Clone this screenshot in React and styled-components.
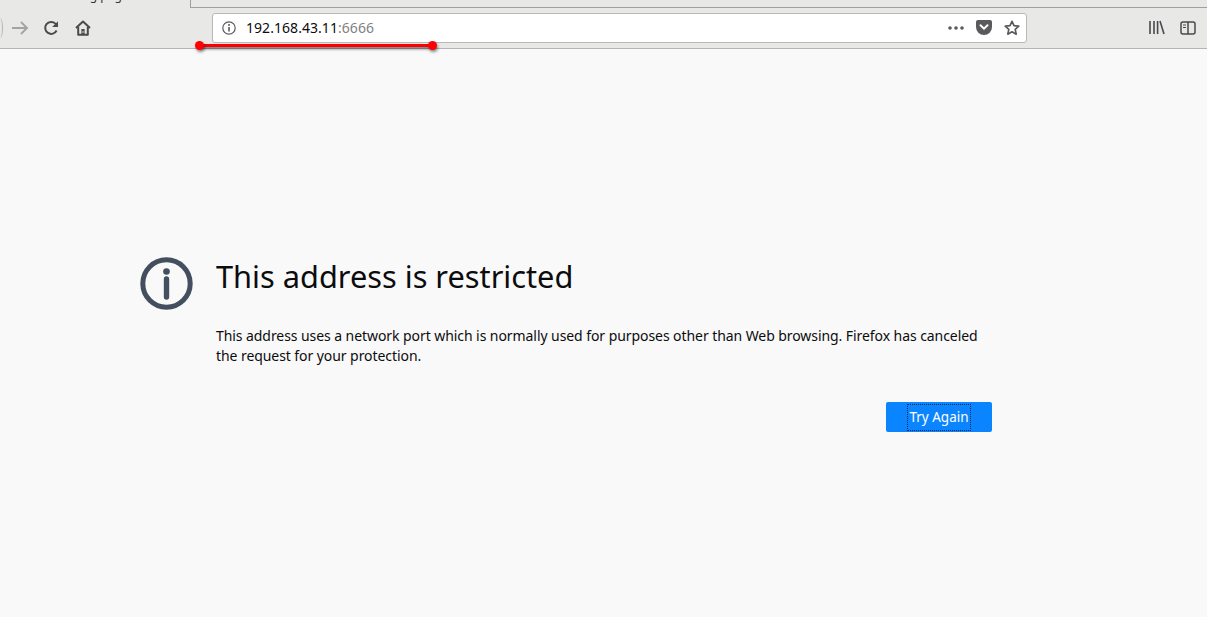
import React from "react";
import styled, { createGlobalStyle } from "styled-components";

const GlobalStyle = createGlobalStyle`
  html, body {
    margin: 0;
    height: 100%;
    overflow: hidden;
    background: #f9f9fa;
    font-family: "Noto Sans", "Open Sans", sans-serif;
  }
`;

const Page = styled.div`
  position: relative;
  display: flex;
  flex-direction: column;
  width: 1207px;
  height: 617px;
  overflow: hidden;
`;

const TabStrip = styled.div`
  display: flex;
  height: 8px;
  background: #e8e8e7;
`;

const ActiveTab = styled.div`
  box-sizing: border-box;
  width: 191px;
  height: 8px;
  padding-left: 49px;
  border-right: 1px solid #9f9f9f;
  overflow: hidden;
  font-size: 12px;
  line-height: 1px;
  color: #333;
`;

const TabTitle = styled.div`
  margin-top: -5px;
  white-space: nowrap;
`;

const TabRest = styled.div`
  flex: 1;
  height: 8px;
  box-sizing: border-box;
  border-bottom: 1px solid #9f9f9f;
`;

const Toolbar = styled.div`
  display: flex;
  align-items: center;
  box-sizing: border-box;
  height: 41px;
  padding: 0 8px 1px 0;
  background: #e8e8e7;
  border-bottom: 1px solid #b4b4b3;
`;

const BackEdge = styled.div`
  flex: none;
  width: 3px;
  height: 20px;
  box-sizing: border-box;
  border-right: 1px solid #b4b4b4;
  border-radius: 0 100% 100% 0 / 0 50% 50% 0;
`;

const NavButton = styled.div`
  display: flex;
  align-items: center;
  justify-content: center;
  flex: none;
  width: ${(p) => p.$width || 16}px;
  height: 16px;
  margin-left: ${(p) => p.$left || 0}px;
  color: ${(p) => p.$color || "#4a4a4f"};
`;

const UrlBar = styled.div`
  display: flex;
  align-items: center;
  box-sizing: border-box;
  flex: none;
  width: 815px;
  height: 30px;
  margin-left: 121px;
  padding: 0 6px 0 8px;
  background: #fff;
  border: 1px solid #b9b9b9;
  border-radius: 3px;
`;

const UrlText = styled.div`
  flex: 1;
  margin-left: 9px;
  font-size: 14px;
  letter-spacing: 0.05px;
  color: #0c0c0d;
  white-space: nowrap;
`;

const UrlPort = styled.span`
  color: #7f7f80;
`;

const UrlIcon = styled.div`
  display: flex;
  align-items: center;
  justify-content: center;
  flex: none;
  width: 16px;
  height: 16px;
  margin-left: ${(p) => p.$left || 0}px;
  color: #5a5a5d;
`;

const Content = styled.main`
  flex: 1;
  display: flex;
  align-items: flex-start;
  padding: 208px 0 0 140px;
  background: #f9f9fa;
`;

const ErrorIcon = styled.div`
  flex: none;
  width: 53px;
  height: 53px;
  margin-right: 23px;
  color: #434e5e;
`;

const ErrorBody = styled.div`
  display: flex;
  flex-direction: column;
  width: 776px;
`;

const Title = styled.h1`
  margin: -2px 0 0;
  font-size: 30.75px;
  font-weight: 400;
  line-height: 42px;
  color: #0c0c0d;
  white-space: nowrap;
`;

const Message = styled.p`
  margin: 29px 0 0;
  font-size: 14px;
  letter-spacing: -0.07px;
  line-height: 20px;
  color: #0c0c0d;
`;

const Actions = styled.div`
  display: flex;
  justify-content: flex-end;
  margin-top: 36px;
`;

const TryButton = styled.button`
  display: flex;
  align-items: center;
  justify-content: center;
  box-sizing: border-box;
  width: 106px;
  height: 30px;
  padding: 0;
  border: none;
  border-radius: 2px;
  background: #0a84ff;
  font: inherit;
  color: #fff;
`;

const TryLabel = styled.span`
  font-size: 13.5px;
  line-height: 27px;
  padding: 0 2px;
  outline: 1px dotted #12294a;
  outline-offset: -1px;
`;

/* red marker somebody drew over the screenshot */
const Annotation = styled.div`
  position: absolute;
  left: 199px;
  top: 44px;
  width: 234px;
  height: 3px;
  background: #f00;
  box-shadow: 1px 2px 3px rgba(0, 0, 0, 0.55);

  &::before,
  &::after {
    content: "";
    position: absolute;
    top: -3px;
    width: 9px;
    height: 9px;
    border-radius: 50%;
    background: #f00;
    box-shadow: 1px 2px 3px rgba(0, 0, 0, 0.45);
  }
  &::before { left: -4px; }
  &::after { right: -4px; }
`;

const Forward = () => (
  <svg width="18" height="16" viewBox="0 0 18 16" fill="none" stroke="currentColor" strokeWidth="1.8">
    <path d="M1 8h15M10 2l6 6-6 6" />
  </svg>
);

const Reload = () => (
  <svg width="16" height="16" viewBox="0 0 16 16" fill="none" stroke="currentColor" strokeWidth="2">
    <path d="M13.6 10.5A6 6 0 1 1 12.4 3.6L14 5.4" />
    <path d="M15 1.2V7H9.2z" fill="currentColor" stroke="none" />
  </svg>
);

const Home = () => (
  <svg width="16" height="16" viewBox="0 0 16 16" fill="none" stroke="currentColor" strokeWidth="2" strokeLinejoin="round">
    <path d="M1 8l7-6.4L15 8" />
    <path d="M3.2 7v7.8h9.6V7" />
    <path d="M6.4 9h3.2v5.5H6.4z" fill="currentColor" stroke="none" />
    <path d="M7.4 11.2h1.2v1.6H7.4z" fill="#e8e8e7" stroke="none" />
  </svg>
);

const InfoSmall = () => (
  <svg width="14" height="14" viewBox="0 0 14 14" fill="none" stroke="currentColor">
    <circle cx="7" cy="7" r="6.2" strokeWidth="1.2" />
    <path d="M7 6v4.4" strokeWidth="1.6" />
    <circle cx="7" cy="3.9" r="1" fill="currentColor" stroke="none" />
  </svg>
);

const Dots = () => (
  <svg width="16" height="4" viewBox="0 0 16 4" fill="currentColor">
    <circle cx="2" cy="2" r="1.8" />
    <circle cx="8" cy="2" r="1.8" />
    <circle cx="14" cy="2" r="1.8" />
  </svg>
);

const Pocket = () => (
  <svg width="16" height="15" viewBox="0 0 16 15">
    <path d="M2 0h12a2 2 0 0 1 2 2v5a8 8 0 0 1-16 0V2a2 2 0 0 1 2-2z" fill="currentColor" />
    <path d="M4.5 5.2L8 8.6l3.5-3.4" fill="none" stroke="#fff" strokeWidth="2" strokeLinecap="round" />
  </svg>
);

const Star = () => (
  <svg width="16" height="16" viewBox="0 0 16 16" fill="none" stroke="currentColor" strokeWidth="1.7" strokeLinejoin="round">
    <path d="M8 1.3l2 4.4 4.8.5-3.6 3.2 1 4.8L8 11.8l-4.2 2.4 1-4.8L1.2 6.2 6 5.7z" />
  </svg>
);

const Library = () => (
  <svg width="16" height="15" viewBox="0 0 16 15" fill="none" stroke="currentColor" strokeWidth="1.6">
    <path d="M1 1v13M5 1v13M8.6 1v13M11 1l4 13" />
  </svg>
);

const Sidebar = () => (
  <svg width="16" height="14" viewBox="0 0 16 14" fill="none" stroke="currentColor" strokeWidth="1.5">
    <rect x="1" y="1" width="14" height="12" rx="2" />
    <path d="M8 1v12" />
    <path d="M3 4h3M3 6.5h3" strokeWidth="1.2" />
  </svg>
);

const BigInfo = () => (
  <svg width="53" height="53" viewBox="0 0 53 53" fill="none" stroke="currentColor">
    <circle cx="26.5" cy="26.5" r="23.7" strokeWidth="5" />
    <circle cx="26.5" cy="14.5" r="3.3" fill="currentColor" stroke="none" />
    <path d="M26.5 22v18" strokeWidth="5.4" strokeLinecap="round" />
  </svg>
);

export default function App() {
  return (
    <Page>
      <GlobalStyle />
      <TabStrip>
        <ActiveTab>
          <TabTitle>Blocking page</TabTitle>
        </ActiveTab>
        <TabRest />
      </TabStrip>
      <Toolbar>
        <BackEdge />
        <NavButton $width={18} $left={8} $color="#a3a3a4">
          <Forward />
        </NavButton>
        <NavButton $left={14}>
          <Reload />
        </NavButton>
        <NavButton $left={16}>
          <Home />
        </NavButton>
        <UrlBar>
          <UrlIcon>
            <InfoSmall />
          </UrlIcon>
          <UrlText>
            192.168.43.11<UrlPort>:6666</UrlPort>
          </UrlText>
          <UrlIcon>
            <Dots />
          </UrlIcon>
          <UrlIcon $left={12}>
            <Pocket />
          </UrlIcon>
          <UrlIcon $left={12}>
            <Star />
          </UrlIcon>
        </UrlBar>
        <NavButton $left={122}>
          <Library />
        </NavButton>
        <NavButton $left={15}>
          <Sidebar />
        </NavButton>
      </Toolbar>
      <Content>
        <ErrorIcon>
          <BigInfo />
        </ErrorIcon>
        <ErrorBody>
          <Title>This address is restricted</Title>
          <Message>
            This address uses a network port which is normally used for purposes other than Web browsing. Firefox has
            canceled the request for your protection.
          </Message>
          <Actions>
            <TryButton>
              <TryLabel>Try Again</TryLabel>
            </TryButton>
          </Actions>
        </ErrorBody>
      </Content>
      <Annotation />
    </Page>
  );
}
